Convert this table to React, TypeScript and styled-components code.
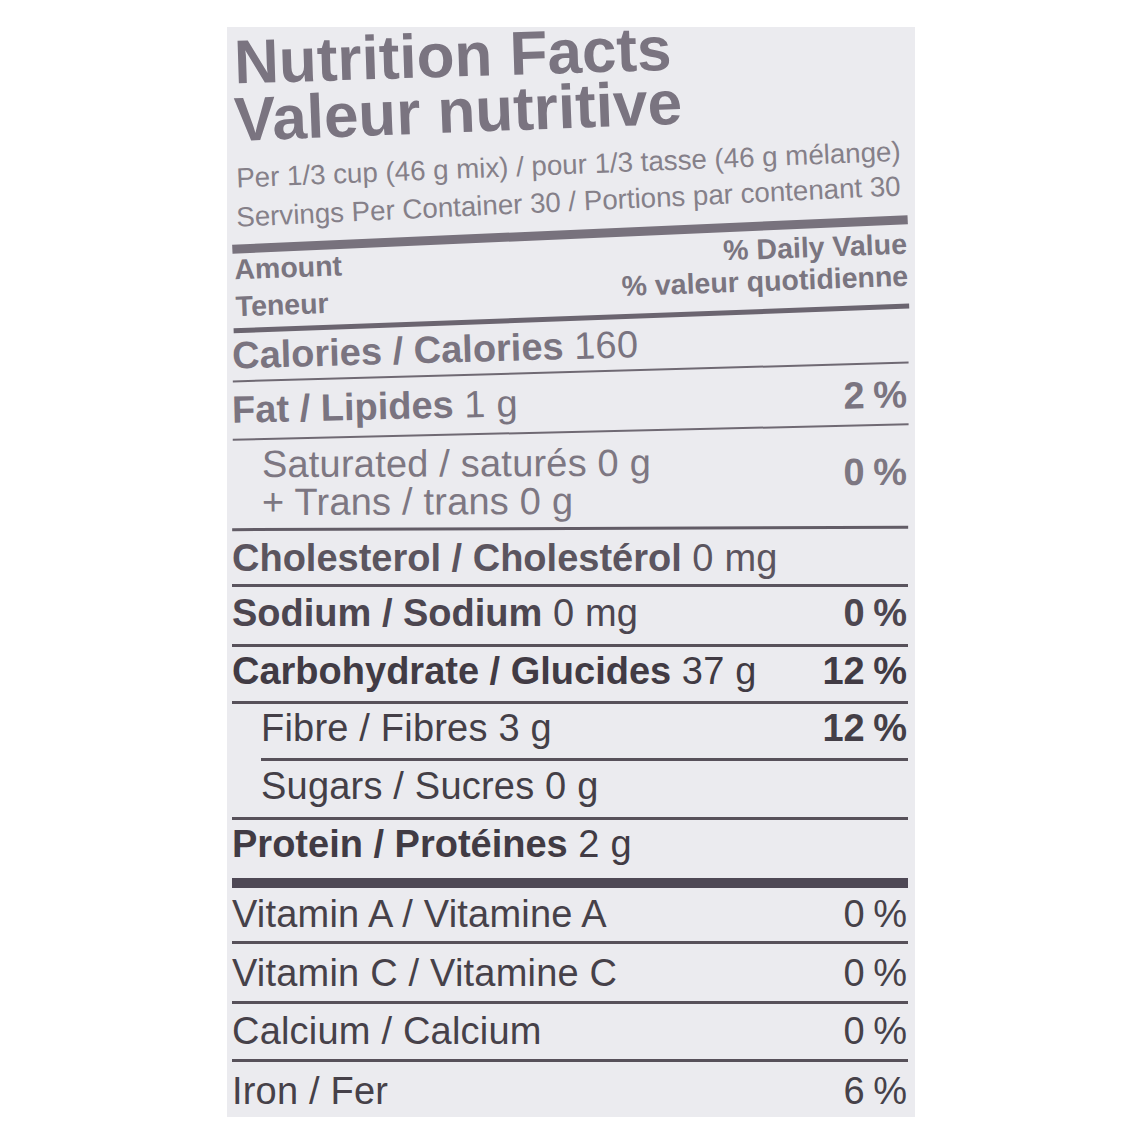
import React from "react";
import styled, { createGlobalStyle } from "styled-components";

const Global = createGlobalStyle`
  html, body { margin: 0; padding: 0; background: #ffffff; }
  body { font-family: "Liberation Sans", Arial, Helvetica, sans-serif; }
`;

const Page = styled.div`
  width: 1145px;
  height: 1145px;
  padding: 27px 0 0 227px;
  box-sizing: border-box;
`;

const Label = styled.section`
  width: 688px;
  height: 1090px;
  background: #ebebef;
  padding: 0 7px 0 5px;
  box-sizing: border-box;
  display: flex;
  flex-direction: column;
  font-family: "Liberation Sans", Arial, Helvetica, sans-serif;
`;

const Title = styled.h1<{ $tilt: number; $mt: number }>`
  margin: ${(p) => p.$mt}px 0 0 0;
  padding-left: 2px;
  font-size: 62px;
  line-height: 56px;
  font-weight: 700;
  color: #7a7480;
  white-space: nowrap;
  transform: rotate(${(p) => p.$tilt}deg);
`;

const Serving = styled.p<{ $tilt: number; $mt: number }>`
  margin: ${(p) => p.$mt}px 0 0 0;
  padding-left: 4px;
  font-size: 27.7px;
  line-height: 36px;
  color: #858089;
  white-space: nowrap;
  transform: rotate(${(p) => p.$tilt}deg);
`;

const Rule = styled.div<{ $h: number; $tilt: number; $mt: number; $color: string }>`
  margin-top: ${(p) => p.$mt}px;
  height: ${(p) => p.$h}px;
  background: ${(p) => p.$color};
  transform: rotate(${(p) => p.$tilt}deg);
`;

const HeadRow = styled.div<{ $tilt: number }>`
  display: flex;
  justify-content: space-between;
  align-items: flex-start;
  box-sizing: border-box;
  height: 82px;
  border-bottom: 5px solid #6b6570;
  font-size: 28.5px;
  font-weight: 700;
  color: #7a7580;
  transform: rotate(${(p) => p.$tilt}deg);
`;

const HeadLeft = styled.div`
  padding-left: 3px;
  line-height: 37px;
`;

const HeadRight = styled.div`
  margin-top: 1px;
  line-height: 32px;
  text-align: right;
`;

const Row = styled.div<{
  $h: number;
  $pb: number;
  $line: number;
  $lineColor: string;
  $tilt: number;
  $indent: number;
  $inset: number;
  $color: string;
}>`
  display: flex;
  justify-content: space-between;
  align-items: flex-end;
  box-sizing: border-box;
  flex: none;
  height: ${(p) => p.$h}px;
  padding-bottom: ${(p) => p.$pb}px;
  padding-left: ${(p) => p.$inset}px;
  margin-left: ${(p) => p.$indent}px;
  border-bottom: ${(p) => p.$line}px solid ${(p) => p.$lineColor};
  font-size: 38px;
  line-height: 38px;
  color: ${(p) => p.$color};
  white-space: nowrap;
  transform: rotate(${(p) => p.$tilt}deg);
`;

const Name = styled.div`
  display: flex;
  flex-direction: column;
  letter-spacing: 0.2px;
`;

const Strong = styled.span`
  font-weight: 700;
  letter-spacing: 0;
`;

const Pct = styled.span<{ $bold: boolean; $raise: number }>`
  font-weight: ${(p) => (p.$bold ? 700 : 400)};
  margin-bottom: ${(p) => p.$raise}px;
  padding-right: 1px;
  word-spacing: -2px;
`;

type Item = {
  lines: { b?: string; r?: string }[];
  pct?: string;
  bold?: boolean;
  h: number;
  pb: number;
  line?: number;
  lineColor?: string;
  tilt?: number;
  indent?: number;
  inset?: number;
  color: string;
  raise?: number;
};

const items: Item[] = [
  { lines: [{ b: "Calories / Calories ", r: "160" }], h: 52.25, pb: 6.75, line: 2.5, lineColor: "#6f6973", tilt: -1.6, color: "#7a7480" },
  { lines: [{ b: "Fat / Lipides ", r: "1 g" }], pct: "2 %", bold: true, h: 60, pb: 10.45, line: 2.5, lineColor: "#6f6973", tilt: -1.3, color: "#7a7480" },
  {
    lines: [{ r: "Saturated / saturés 0 g" }, { r: "+ Trans / trans 0 g" }],
    pct: "0 %",
    bold: true,
    h: 96.75,
    pb: 6.7,
    line: 3,
    lineColor: "#625c66",
    tilt: -0.2,
    inset: 30,
    color: "#7d7782",
    raise: 28,
  },
  { lines: [{ b: "Cholesterol / Cholestérol ", r: "0 mg" }], h: 57, pb: 6.7, line: 3, lineColor: "#5a545e", color: "#5b555f" },
  { lines: [{ b: "Sodium / Sodium ", r: "0 mg" }], pct: "0 %", bold: true, h: 60, pb: 11.7, line: 3, lineColor: "#57515a", color: "#4c4650" },
  { lines: [{ b: "Carbohydrate / Glucides ", r: "37 g" }], pct: "12 %", bold: true, h: 57, pb: 10.7, line: 3, lineColor: "#57515a", color: "#413b44" },
  { lines: [{ r: "Fibre / Fibres 3 g" }], pct: "12 %", bold: true, h: 57, pb: 10.7, line: 3, lineColor: "#57515a", indent: 29, color: "#443f47" },
  { lines: [{ r: "Sugars / Sucres 0 g" }], h: 59, pb: 11.7, line: 3, lineColor: "#57515a", inset: 29, color: "#443f47" },
  { lines: [{ b: "Protein / Protéines ", r: "2 g" }], h: 68.5, pb: 15.2, line: 10, lineColor: "#4e4855", color: "#413b44" },
  { lines: [{ r: "Vitamin A / Vitamine A" }], pct: "0 %", h: 55.5, pb: 7.7, line: 3, lineColor: "#57515a", color: "#464149" },
  { lines: [{ r: "Vitamin C / Vitamine C" }], pct: "0 %", h: 60, pb: 8.7, line: 3, lineColor: "#57515a", color: "#464149" },
  { lines: [{ r: "Calcium / Calcium" }], pct: "0 %", h: 58, pb: 8.7, line: 3, lineColor: "#57515a", color: "#464149" },
  { lines: [{ r: "Iron / Fer" }], pct: "6 %", h: 54.5, pb: 6.2, line: 0, color: "#464149" },
];

export default function App() {
  return (
    <Page>
      <Global />
      <Label>
        <Title $tilt={-1.8} $mt={-3}>Nutrition Facts</Title>
        <Title $tilt={-2.2} $mt={-1}>Valeur nutritive</Title>
        <Serving $tilt={-2.3} $mt={12}>Per 1/3 cup (46 g mix) / pour 1/3 tasse (46 g mélange)</Serving>
        <Serving $tilt={-2.7} $mt={1}>Servings Per Container 30 / Portions par contenant 30</Serving>
        <Rule $h={9} $tilt={-2.5} $mt={9.5} $color="#78727d" />
        <HeadRow $tilt={-2.1}>
          <HeadLeft>
            <div>Amount</div>
            <div>Teneur</div>
          </HeadLeft>
          <HeadRight>
            <div>% Daily Value</div>
            <div>% valeur quotidienne</div>
          </HeadRight>
        </HeadRow>
        {items.map((it, i) => (
          <Row
            key={i}
            $h={it.h}
            $pb={it.pb}
            $line={it.line ?? 0}
            $lineColor={it.lineColor ?? "transparent"}
            $tilt={it.tilt ?? 0}
            $indent={it.indent ?? 0}
            $inset={it.inset ?? 0}
            $color={it.color}
          >
            <Name>
              {it.lines.map((l, j) => (
                <span key={j}>
                  {l.b && <Strong>{l.b}</Strong>}
                  {l.r}
                </span>
              ))}
            </Name>
            {it.pct && (
              <Pct $bold={!!it.bold} $raise={it.raise ?? 0}>
                {it.pct}
              </Pct>
            )}
          </Row>
        ))}
      </Label>
    </Page>
  );
}
